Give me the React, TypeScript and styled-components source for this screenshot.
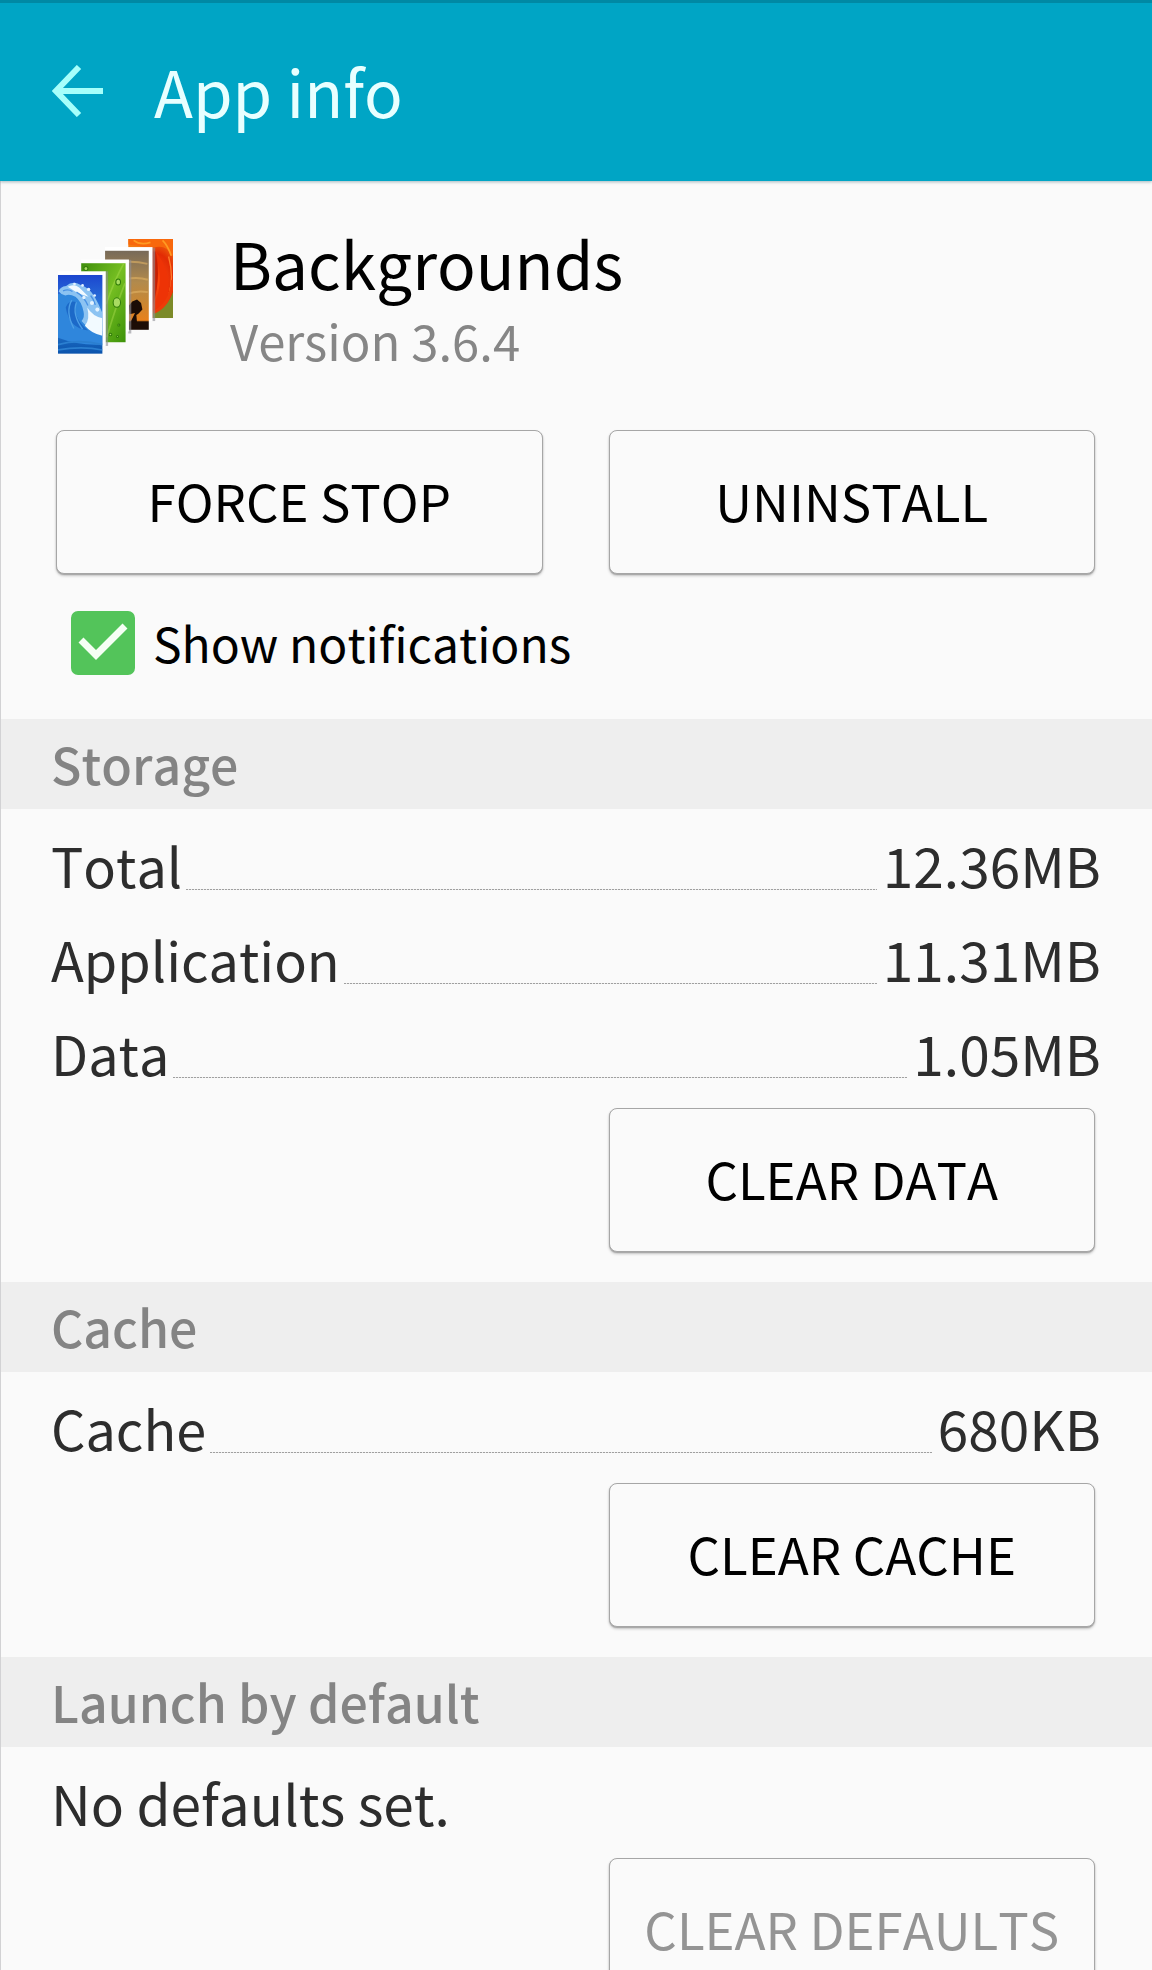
import { useState } from 'react';
import styled, { createGlobalStyle } from 'styled-components';

const GlobalStyle = createGlobalStyle`
  * { box-sizing: border-box; }
  html { scrollbar-width: none; }
  body {
    margin: 0;
    background: #fafafa;
    color: #2d2d2d;
    font-family: "Noto Sans CJK SC", "Noto Sans", sans-serif;
    font-kerning: none;
  }
`;

const Screen = styled.main`
  min-height: 100vh;
  border-left: 1px solid #d2d2d4;
`;

const Header = styled.header`
  display: flex;
  align-items: center;
  gap: 50px;
  height: 181px;
  margin-left: -1px;
  padding: 0 52px 2px;
  border-top: 3px solid #0089a4;
  background: #00a5c5;
  box-shadow: 0 1px 3px rgba(0, 60, 80, 0.35);
`;

const BackButton = styled.button`
  display: flex;
  padding: 0;
  border: 0;
  background: none;
  cursor: pointer;
`;

const Title = styled.h1`
  margin: 0;
  padding-bottom: 2px;
  color: #e8ffff;
  font-size: 64px;
  font-weight: 400;
  line-height: 90px;
`;

const Summary = styled.section`
  padding: 42px 57px 44px 55px;
`;

const AppIdentity = styled.div`
  display: flex;
  align-items: center;
  gap: 56px;
  margin-bottom: 51px;
`;

const AppIcon = styled.svg`
  flex: none;
  width: 116px;
  height: 116px;
  margin: 0 0 10px 2px;
`;

const AppName = styled.h2`
  margin: 0;
  color: #000;
  font-size: 64px;
  font-weight: 400;
  line-height: 78px;
`;

const Version = styled.p`
  margin: 0;
  color: #868686;
  font-size: 49px;
  line-height: 78px;
`;

const ButtonGrid = styled.div`
  display: grid;
  grid-template-columns: 1fr 1fr;
  column-gap: 66px;
`;

const ActionButton = styled.button<{ $end?: boolean }>`
  grid-column: ${(p) => (p.$end ? 2 : 'auto')};
  height: 144px;
  padding: 0 0 4px;
  border: 1px solid #a6a6a6;
  border-radius: 8px;
  background: #fafafa;
  box-shadow: 0 1px 1px #a6a6a6, 0 2px 3px rgba(0, 0, 0, 0.2);
  color: #000;
  font-family: inherit;
  font-size: 51px;
  font-kerning: none;
  line-height: 72px;
  white-space: nowrap;
  cursor: pointer;

  &:disabled {
    color: #949494;
    cursor: default;
  }
`;

const NotificationToggle = styled.label`
  display: flex;
  align-items: center;
  gap: 18px;
  width: fit-content;
  margin-top: 37px;
  padding-left: 15px;
  color: #000;
  font-size: 48px;
  line-height: 62px;
  cursor: pointer;
`;

const CheckSlot = styled.span`
  display: grid;
  width: 64px;
  height: 64px;

  > * { grid-area: 1 / 1; }
`;

const CheckInput = styled.input`
  appearance: none;
  width: 64px;
  height: 64px;
  margin: 0;
  border: 4px solid #8c8c8c;
  border-radius: 7px;
  cursor: pointer;

  &:checked {
    border-color: #53c45a;
    background: #53c45a;
  }

  &:not(:checked) + svg { visibility: hidden; }
`;

const CheckMark = styled.svg`
  width: 64px;
  height: 64px;
  pointer-events: none;
`;

const ToggleText = styled.span`
  padding-bottom: 2px;
`;

const SectionTitle = styled.h3`
  margin: 0;
  padding: 0 50px 2px;
  background: #eeeeee;
  color: #848484;
  font-size: 50px;
  font-weight: 500;
  line-height: 88px;
`;

const SectionBody = styled.div`
  padding: 8px 0 30px;
`;

const Sizes = styled.dl`
  margin: 0 0 9px;
  padding: 0 51px 0 50px;
`;

const SizeRow = styled.div`
  display: flex;
  align-items: baseline;
  height: 94px;
  line-height: 94px;
`;

const Leader = styled.span`
  flex: 1;
  align-self: flex-end;
  height: 1px;
  margin: 0 6px 21px 4px;
  background: repeating-linear-gradient(90deg, #a0a0a0 0 2px, #ececec 2px 3px);
`;

const Term = styled.dt`
  font-size: 54px;
`;

const Value = styled.dd`
  margin: 0;
  font-size: 55px;
`;

const Note = styled.p`
  margin: 0 0 9px;
  padding: 0 50px;
  font-size: 55px;
  line-height: 94px;
`;

const Actions = styled(ButtonGrid)`
  padding: 0 57px 0 55px;
`;

function BackgroundsIcon() {
  return (
    <AppIcon viewBox="55 55 345 345" aria-hidden="true">
      <defs>
        <linearGradient id="wave" x1="0" y1="0" x2="0" y2="1">
          <stop offset="0" stopColor="#1c46cf" />
          <stop offset="0.5" stopColor="#2f86dc" />
          <stop offset="1" stopColor="#0b53ac" />
        </linearGradient>
        <linearGradient id="leaf" x1="0" y1="0" x2="1" y2="1">
          <stop offset="0" stopColor="#3f8f0c" />
          <stop offset="0.5" stopColor="#76bf22" />
          <stop offset="1" stopColor="#3d9209" />
        </linearGradient>
        <linearGradient id="dusk" x1="0" y1="0" x2="0" y2="1">
          <stop offset="0" stopColor="#776a59" />
          <stop offset="0.4" stopColor="#b28a4c" />
          <stop offset="0.65" stopColor="#c98733" />
          <stop offset="0.88" stopColor="#e8811c" />
          <stop offset="0.9" stopColor="#1d0d06" />
        </linearGradient>
        <radialGradient id="petal" cx="0.65" cy="0.55" r="0.6">
          <stop offset="0" stopColor="#ff4a10" />
          <stop offset="0.6" stopColor="#e22b04" />
          <stop offset="1" stopColor="#f47a12" />
        </radialGradient>
        <clipPath id="waveClip"><rect x="55" y="165" width="132" height="234" /></clipPath>
        <clipPath id="petalClip"><rect x="264" y="58" width="133" height="235" /></clipPath>
      </defs>
      <rect x="264" y="58" width="133" height="235" fill="url(#petal)" />
      <g clipPath="url(#petalClip)">
        <path d="M264 58h133v52q-20-38-58-26-40-4-75-10z" fill="#f8680c" />
        <path d="M280 62q20 16 50 6M366 62q16 16 26 46" fill="none" stroke="#ff9a22" strokeWidth="5" />
        <path d="M345 95q52 60 34 150-18 26-42 20 38-80 8-170z" fill="#ee3306" />
        <path d="M345 95q18 80-8 160v-160z" fill="#c91f02" />
        <path d="M384 110q16 60 2 110" fill="none" stroke="#ff7a2a" strokeWidth="4" />
        <path d="M397 215q-20 54-60 58v20h60z" fill="#7c8a28" />
        <path d="M397 180q-8 76-58 96" fill="none" stroke="#ee3b08" strokeWidth="10" />
      </g>
      <rect x="335" y="84" width="9" height="218" fill="#8f9096" opacity="0.6" />
      <rect x="195" y="82" width="141" height="220" fill="#fff" />
      <rect x="195" y="93" width="130" height="235" fill="url(#dusk)" />
      <path d="M205 140q50-24 116-8M230 185q50-18 92-6M260 222q30-12 62-6" fill="none" stroke="#e1b364" strokeWidth="6" opacity="0.6" />
      <path d="M270 306l14-28-16 4-2-26 10-12 14-6 12 10 4 20-12 12-6 4 2 22z" fill="#1b0c06" />
      <rect x="264" y="120" width="9" height="219" fill="#8f9096" opacity="0.6" />
      <rect x="124" y="119" width="142" height="214" fill="#fff" />
      <rect x="124" y="130" width="132" height="235" fill="url(#leaf)" />
      <path d="M250 132q-28 50-52 120M254 190q-24 60-54 160" fill="none" stroke="#a4d84a" strokeWidth="5" opacity="0.5" />
      <g fill="#a9dc62" stroke="#2f7a08" strokeWidth="3">
        <ellipse cx="234" cy="186" rx="7" ry="9" />
        <ellipse cx="230" cy="247" rx="11" ry="14" />
        <circle cx="138" cy="146" r="6" />
        <circle cx="236" cy="314" r="3" />
        <circle cx="211" cy="342" r="4" />
        <circle cx="232" cy="348" r="3" />
      </g>
      <rect x="194" y="154" width="10" height="222" fill="#8f9096" opacity="0.6" />
      <rect x="55" y="154" width="142" height="222" fill="#fff" />
      <rect x="55" y="165" width="132" height="234" fill="url(#wave)" />
      <g clipPath="url(#waveClip)">
        <path d="M55 222q30-14 60 6 30 20 40 60 12 30 32 44v40q-70 4-132-20z" fill="#2f86dc" />
        <path d="M78 262q8-24 32-16-16 40 34 84-56-6-66-68z" fill="#1c69c8" />
        <path d="M96 240q-20 34 6 84M110 246q-14 36 18 80" fill="none" stroke="#4d9fe6" strokeWidth="4" />
        <path d="M57 214q4-14 22-16 20-18 42-4 26 8 42 34 14 24 24 50v60q-40-8-62-36 10-12 6-28-6-30-24-44-18-10-30-4-12-2-20-12z" fill="#8cc3f2" />
        <path d="M142 262q16 26 45 32v52q-34-8-52-30 16-18 7-54zM84 200q18-10 34 2l28 28-30-10z" fill="#f2faff" />
        <path d="M70 212q16-6 28 2M110 216q22 12 34 40M152 226q10 12 14 28" fill="none" stroke="#4a92e4" strokeWidth="4" />
        <g fill="#e4f3ff">
          <circle cx="104" cy="192" r="4" />
          <circle cx="128" cy="196" r="4" />
          <circle cx="146" cy="208" r="5" />
          <circle cx="164" cy="226" r="4" />
          <circle cx="156" cy="248" r="6" />
          <circle cx="172" cy="268" r="6" />
          <circle cx="132" cy="232" r="5" />
        </g>
        <path d="M55 372q60-18 132 0M55 388q70-12 132 0" fill="none" stroke="#2b7fd0" strokeWidth="5" />
      </g>
    </AppIcon>
  );
}

const storage = [
  { label: 'Total', size: '12.36MB' },
  { label: 'Application', size: '11.31MB' },
  { label: 'Data', size: '1.05MB' },
];

const cache = [{ label: 'Cache', size: '680KB' }];

function SizeList({ items }: { items: { label: string; size: string }[] }) {
  return (
    <Sizes>
      {items.map((item) => (
        <SizeRow key={item.label}>
          <Term>{item.label}</Term>
          <Leader aria-hidden="true" />
          <Value>{item.size}</Value>
        </SizeRow>
      ))}
    </Sizes>
  );
}

export default function App() {
  const [notify, setNotify] = useState(true);

  return (
    <>
      <GlobalStyle />
      <Screen>
        <Header>
          <BackButton type="button" aria-label="Back">
            <svg width="52" height="52" viewBox="0 0 52 52" fill="none" stroke="#a6fffb" strokeWidth="6">
              <path d="M27 2L4 26l23 24M4 26h47" />
            </svg>
          </BackButton>
          <Title>App info</Title>
        </Header>

        <Summary>
          <AppIdentity>
            <BackgroundsIcon />
            <div>
              <AppName>Backgrounds</AppName>
              <Version>Version 3.6.4</Version>
            </div>
          </AppIdentity>
          <ButtonGrid>
            <ActionButton type="button">FORCE STOP</ActionButton>
            <ActionButton type="button">UNINSTALL</ActionButton>
          </ButtonGrid>
          <NotificationToggle htmlFor="notifications">
            <CheckSlot>
              <CheckInput
                id="notifications"
                type="checkbox"
                checked={notify}
                onChange={(e) => setNotify(e.target.checked)}
              />
              <CheckMark viewBox="0 0 64 64" fill="none" stroke="#f6fff4" strokeWidth="7" aria-hidden="true">
                <path d="M10 29l15 15 29-29" />
              </CheckMark>
            </CheckSlot>
            <ToggleText>Show notifications</ToggleText>
          </NotificationToggle>
        </Summary>

        <section>
          <SectionTitle>Storage</SectionTitle>
          <SectionBody>
            <SizeList items={storage} />
            <Actions>
              <ActionButton type="button" $end>CLEAR DATA</ActionButton>
            </Actions>
          </SectionBody>
        </section>

        <section>
          <SectionTitle>Cache</SectionTitle>
          <SectionBody>
            <SizeList items={cache} />
            <Actions>
              <ActionButton type="button" $end>CLEAR CACHE</ActionButton>
            </Actions>
          </SectionBody>
        </section>

        <section>
          <SectionTitle>Launch by default</SectionTitle>
          <SectionBody>
            <Note>No defaults set.</Note>
            <Actions>
              <ActionButton type="button" $end disabled>CLEAR DEFAULTS</ActionButton>
            </Actions>
          </SectionBody>
        </section>
      </Screen>
    </>
  );
}
